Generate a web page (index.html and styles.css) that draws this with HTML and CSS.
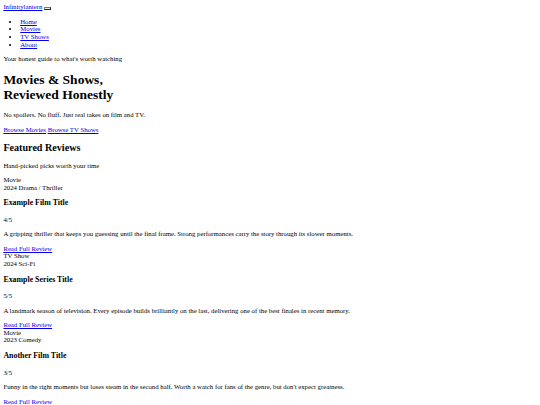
FILE: index.html
```html
<!DOCTYPE html>
<html lang="en">
<head>
<meta charset="utf-8">
<title>Infinitylantern</title>
<link rel="stylesheet" href="styles.css">
</head>
<body class="page">
<header class="site-header">
  <a href="#" class="logo">Infinitylantern</a>
  <button class="menu-toggle" aria-label="Menu"></button>
  <nav class="main-nav">
    <ul class="nav-list">
      <li><a href="#">Home</a></li>
      <li><a href="#">Movies</a></li>
      <li><a href="#">TV Shows</a></li>
      <li><a href="#">About</a></li>
    </ul>
  </nav>
</header>
<main>
  <section class="hero">
    <p class="tagline">Your honest guide to what's worth watching</p>
    <h1 class="hero-title">Movies &amp; Shows,<br>Reviewed Honestly</h1>
    <p>No spoilers. No fluff. Just real takes on film and TV.</p>
    <div class="hero-actions"><a href="#">Browse Movies</a> <a href="#">Browse TV Shows</a></div>
  </section>
  <section class="featured">
    <h2 class="section-title">Featured Reviews</h2>
    <p>Hand-picked picks worth your time</p>
    <article class="review-card">
      <div class="type">Movie</div>
      <div class="meta">2024 Drama / Thriller</div>
      <h3 class="card-title">Example Film Title</h3>
      <p class="rating">4/5</p>
      <p>A gripping thriller that keeps you guessing until the final frame. Strong performances carry the story through its slower moments.</p>
      <a href="#">Read Full Review</a>
    </article>
    <article class="review-card">
      <div class="type">TV Show</div>
      <div class="meta">2024 Sci-Fi</div>
      <h3 class="card-title">Example Series Title</h3>
      <p class="rating">5/5</p>
      <p>A landmark season of television. Every episode builds brilliantly on the last, delivering one of the best finales in recent memory.</p>
      <a href="#">Read Full Review</a>
    </article>
    <article class="review-card">
      <div class="type">Movie</div>
      <div class="meta">2023 Comedy</div>
      <h3 class="card-title">Another Film Title</h3>
      <p class="rating">3/5</p>
      <p>Funny in the right moments but loses steam in the second half. Worth a watch for fans of the genre, but don't expect greatness.</p>
      <a href="#">Read Full Review</a>
    </article>
  </section>
</main>
</body>
</html>
```
FILE: styles.css
```css
html {
  font-size: 6.75px;
}
.page {
  margin: 3.375px;
  font-family: "Liberation Serif", "Times New Roman", serif;
  font-size: 6.75px;
  line-height: 1.132;
  color: #000;
}
a {
  color: #0000ee;
}
.menu-toggle {
  display: inline-block;
  width: 7px;
  height: 3px;
  padding: 0;
  border: 0.75px outset #767676;
  background: #efefef;
  vertical-align: baseline;
}
.nav-list {
  padding-left: 16.875px;
}
```
